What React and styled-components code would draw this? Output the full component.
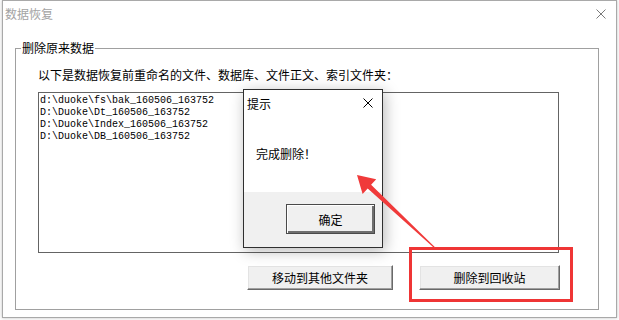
import styled, { createGlobalStyle } from "styled-components";

const GlobalStyle = createGlobalStyle`
  html, body {
    margin: 0;
    padding: 0;
    background: #ffffff;
    overflow: hidden;
  }
  * {
    box-sizing: border-box;
  }
`;

const CJK = `"Noto Sans CJK SC", "Microsoft YaHei", sans-serif`;

const files = [
  "d:\\duoke\\fs\\bak_160506_163752",
  "D:\\Duoke\\Dt_160506_163752",
  "D:\\Duoke\\Index_160506_163752",
  "D:\\Duoke\\DB_160506_163752",
];

function CloseIcon({ color, size }) {
  return (
    <svg width={size} height={size} viewBox="0 0 10 10">
      <path d="M0.5 0.5 L9.5 9.5 M9.5 0.5 L0.5 9.5" stroke={color} strokeWidth="1" fill="none" />
    </svg>
  );
}

export default function App() {
  return (
    <Screen>
      <GlobalStyle />
      <Window>
        <TitleBar>
          <Title>数据恢复</Title>
          <CloseIcon color="#7a7a7a" size={10} />
        </TitleBar>
        <GroupBox>
          <Legend>删除原来数据</Legend>
          <GroupBody>
            <Hint>以下是数据恢复前重命名的文件、数据库、文件正文、索引文件夹：</Hint>
            <ListBox>
              {files.map((f) => (
                <ListItem key={f}>{f}</ListItem>
              ))}
            </ListBox>
            <ButtonRow>
              <Button $width={146}>移动到其他文件夹</Button>
              <Button $width={141}>删除到回收站</Button>
            </ButtonRow>
          </GroupBody>
        </GroupBox>
      </Window>

      <Dialog>
        <DialogTitle>
          <span>提示</span>
          <CloseIcon color="#000" size={10} />
        </DialogTitle>
        <DialogBody>完成删除！</DialogBody>
        <DialogFooter>
          <DefaultButton>确定</DefaultButton>
        </DialogFooter>
      </Dialog>

      <Highlight />
      <Arrow width="619" height="320" viewBox="0 0 619 320">
        <polygon
          points="357,175 376.2,179.3 371.1,184.8 435.3,247.6 434.7,248.4 367.7,188.4 362.6,193.9"
          fill="#f03a3a"
        />
      </Arrow>
    </Screen>
  );
}

const Screen = styled.div`
  position: relative;
  width: 619px;
  height: 320px;
  overflow: hidden;
  font-family: ${CJK};
`;

const Window = styled.div`
  margin-left: 2px;
  width: 615px;
  height: 318px;
  border: 1px solid #a9a9a9;
  background: #ffffff;
  box-shadow: 0 0 3px rgba(0, 0, 0, 0.25);
  display: flex;
  flex-direction: column;
`;

const TitleBar = styled.div`
  height: 39px;
  display: flex;
  align-items: flex-start;
  justify-content: space-between;
  padding: 5px 10px 0 2px;
  svg {
    margin-top: 3px;
  }
`;

const Title = styled.span`
  font-size: 12px;
  line-height: 16px;
  color: #a3a3a3;
`;

const GroupBox = styled.fieldset`
  margin: 0 0 0 12px;
  padding: 0;
  width: 584px;
  border: 1px solid #a0a0a0;
  min-inline-size: 0;
`;

const Legend = styled.legend`
  margin-left: 5px;
  padding: 0 1px;
  font-size: 12px;
  line-height: 16px;
  color: #000;
`;

const GroupBody = styled.div`
  display: flex;
  flex-direction: column;
  padding: 11px 39px 19px 22px;
`;

const Hint = styled.div`
  font-size: 12px;
  line-height: 16px;
  color: #000;
`;

const ListBox = styled.div`
  margin-top: 9px;
  height: 161px;
  border: 1px solid #646464;
  padding: 2px 1px;
  background: #fff;
`;

const ListItem = styled.div`
  font-family: "Liberation Mono", "DejaVu Sans Mono", monospace;
  font-size: 10px;
  line-height: 12px;
  color: #000;
  white-space: pre;
`;

const ButtonRow = styled.div`
  margin-top: 12px;
  margin-right: -1px;
  display: flex;
  justify-content: flex-end;
  gap: 26px;
`;

const Button = styled.div`
  width: ${(p) => p.$width}px;
  height: 25px;
  display: flex;
  align-items: center;
  justify-content: center;
  background: #f0f0f0;
  border: 1px solid;
  border-color: #ffffff #696969 #696969 #ffffff;
  box-shadow: inset -1px -1px 0 #a0a0a0, inset 1px 1px 0 #e3e3e3;
  font-size: 12px;
  color: #000;
`;

const Dialog = styled.div`
  position: absolute;
  left: 243px;
  top: 89px;
  width: 140px;
  height: 159px;
  border: 1px solid #2f2f2f;
  background: #ffffff;
  box-shadow: 2px 3px 14px rgba(0, 0, 0, 0.28);
  display: flex;
  flex-direction: column;
`;

const DialogTitle = styled.div`
  height: 28px;
  display: flex;
  align-items: flex-start;
  justify-content: space-between;
  padding: 6px 9px 0 3px;
  font-size: 12px;
  line-height: 16px;
  color: #000;
  svg {
    margin-top: 2px;
  }
`;

const DialogBody = styled.div`
  flex: 1;
  padding: 28px 0 0 12px;
  font-size: 12px;
  line-height: 16px;
  color: #000;
`;

const DialogFooter = styled.div`
  height: 55px;
  background: #f0f0f0;
  display: flex;
  justify-content: flex-end;
  align-items: flex-start;
  padding: 12px 7px 0 0;
`;

const DefaultButton = styled.div`
  width: 89px;
  height: 30px;
  display: flex;
  align-items: center;
  justify-content: center;
  background: #f0f0f0;
  border: 1px solid #4a4a4a;
  box-shadow: inset 1px 1px 0 #ffffff, inset -2px -2px 0 #6e6e6e;
  font-size: 12px;
  color: #000;
`;

const Highlight = styled.div`
  position: absolute;
  left: 409px;
  top: 247px;
  width: 164px;
  height: 55px;
  border: 3px solid #ef3535;
`;

const Arrow = styled.svg`
  position: absolute;
  left: 0;
  top: 0;
  pointer-events: none;
`;
